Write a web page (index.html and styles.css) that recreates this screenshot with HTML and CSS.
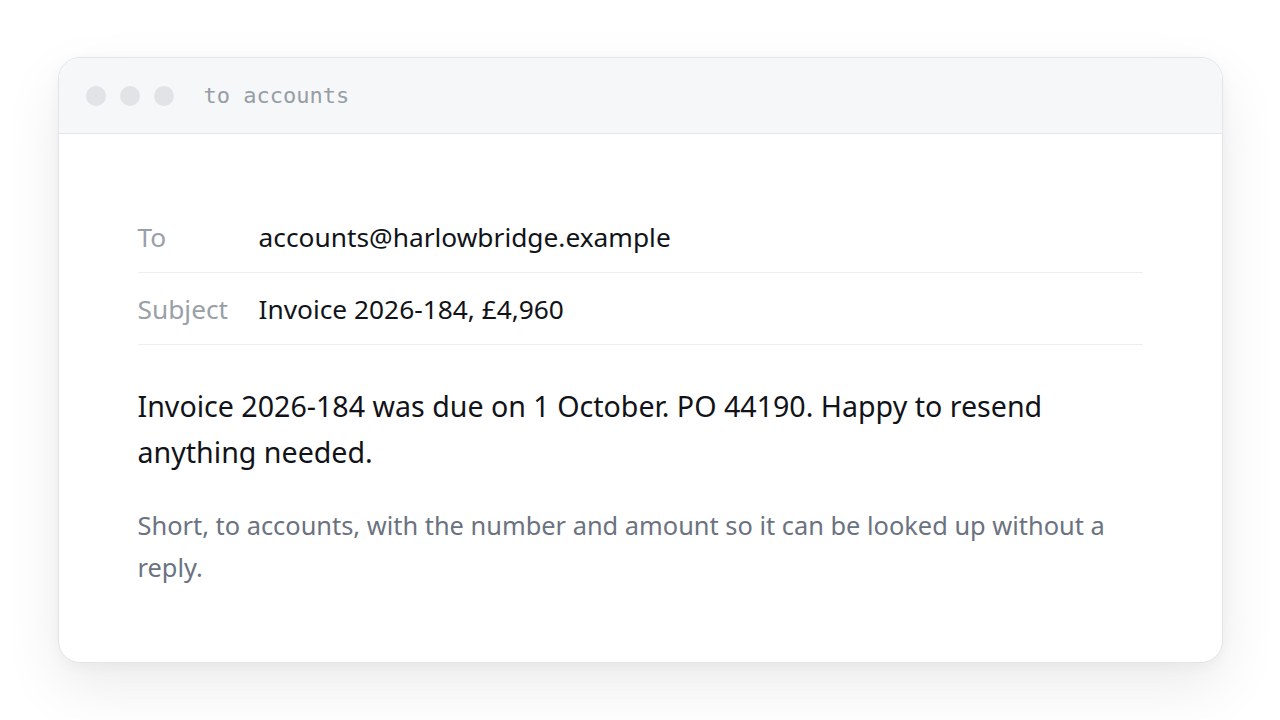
FILE: index.html
```html
<!DOCTYPE html>
<html lang="en">
<head>
<meta charset="utf-8">
<title>to accounts</title>
<link rel="stylesheet" href="styles.css">
</head>
<body>
  <main class="stage">
    <section class="window">
      <header class="titlebar">
        <span class="dot"></span>
        <span class="dot"></span>
        <span class="dot"></span>
        <span class="title">to accounts</span>
      </header>
      <div class="message">
        <div class="field">
          <span class="label">To</span>
          <span class="value">accounts@harlowbridge.example</span>
        </div>
        <div class="field">
          <span class="label">Subject</span>
          <span class="value">Invoice 2026-184, £4,960</span>
        </div>
        <p class="body">Invoice 2026-184 was due on 1 October. PO 44190. Happy to resend anything needed.</p>
        <p class="note">Short, to accounts, with the number and amount so it can be looked up without a reply.</p>
      </div>
    </section>
  </main>
</body>
</html>
```
FILE: styles.css
```css
* {
  box-sizing: border-box;
}

html, body {
  margin: 0;
  padding: 0;
  background: #ffffff;
}

body {
  font-family: "Noto Sans", "Open Sans", sans-serif;
  color: #111318;
}

.stage {
  width: 1280px;
  height: 720px;
  display: flex;
  align-items: center;
  justify-content: center;
}

.window {
  width: 1165px;
  height: 606px;
  background: #ffffff;
  border: 1px solid #e3e5e8;
  border-radius: 22px;
  overflow: hidden;
  box-shadow: 0 24px 60px rgba(0, 0, 0, 0.08), 0 4px 14px rgba(0, 0, 0, 0.04);
}

.titlebar {
  height: 76px;
  background: #f6f7f8;
  border-bottom: 1px solid #e3e5e8;
  display: flex;
  align-items: center;
  padding-left: 27px;
  gap: 14px;
}

.dot {
  width: 20px;
  height: 20px;
  border-radius: 50%;
  background: #e1e3e6;
}

.title {
  margin-left: 16px;
  font-family: "DejaVu Sans Mono", "Liberation Mono", monospace;
  font-size: 22px;
  color: #979da6;
}

.message {
  padding: 67px 79px 0 79px;
}

.field {
  display: flex;
  align-items: center;
  height: 72px;
  border-bottom: 1px solid #eceef0;
  font-size: 26.3px;
}

.label {
  width: 121px;
  flex: none;
  color: #9aa0a8;
}

.value {
  color: #111318;
}

.body {
  margin: 38px 0 0 0;
  font-size: 28.6px;
  line-height: 46px;
  color: #111318;
  max-width: 940px;
}

.note {
  margin: 29px 0 0 0;
  font-size: 25.4px;
  line-height: 42px;
  color: #6b7280;
}
```
